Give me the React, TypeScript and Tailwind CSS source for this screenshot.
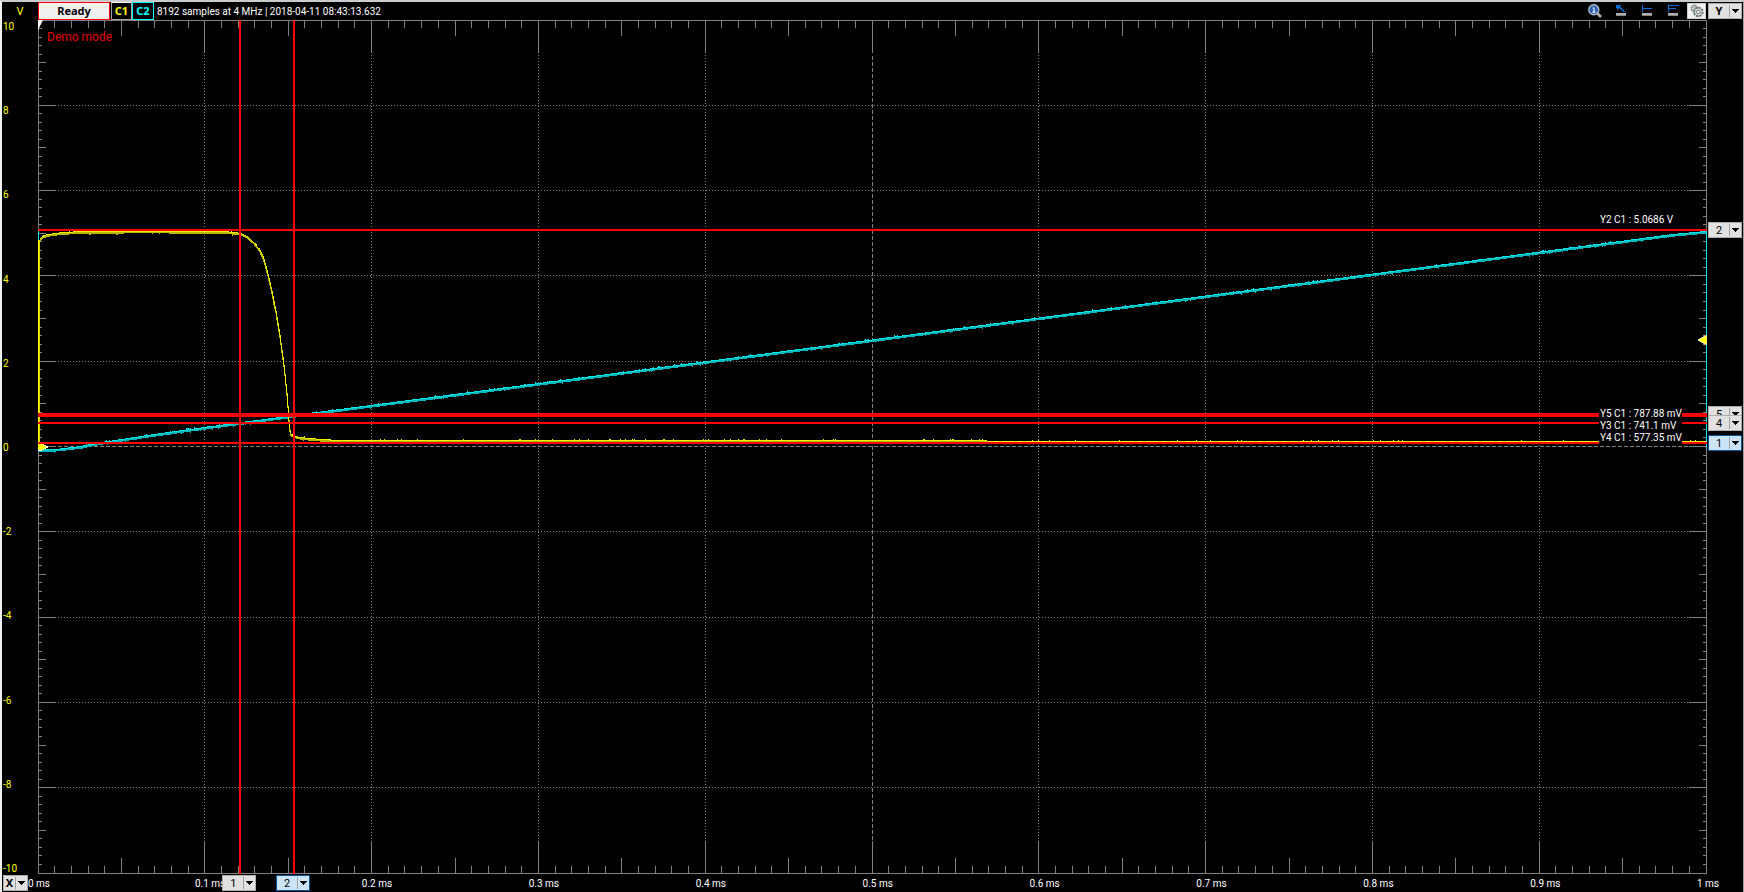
import { useEffect, useRef, useState } from "react";

const V_MAX = 10;
const yLabels = ["10", "8", "6", "4", "2", "0", "-2", "-4", "-6", "-8", "-10"];
const xLabels = ["0 ms", "0.1 ms", "0.2 ms", "0.3 ms", "0.4 ms", "0.5 ms", "0.6 ms", "0.7 ms", "0.8 ms", "0.9 ms"];

const xCursors = [
  { id: "1", at: 0.1213, active: false },
  { id: "2", at: 0.1535, active: true },
];
const yCursors = [
  { id: "2", volts: 5.0686, handle: 5.08, active: false },
  { id: "5", volts: 0.77, handle: 0.77, active: false },
  { id: "3", volts: 0.72, handle: null, active: false },
  { id: "4", volts: 0.56, handle: 0.56, active: false },
  { id: "1", volts: 0.09, handle: 0.09, active: true },
];

/* Channel samples: [time in ms, volts] */
const c1: [number, number][] = [
  [0.0008, 4.85], [0.002, 4.92], [0.005, 4.97], [0.012, 5.01], [0.022, 5.04], [0.06, 5.055], [0.112, 5.045],
  [0.118, 5.02], [0.1213, 5.0], [0.125, 4.93], [0.1285, 4.81], [0.132, 4.64], [0.1345, 4.44], [0.137, 4.08],
  [0.1395, 3.66], [0.142, 3.18], [0.1444, 2.6], [0.147, 1.86], [0.1487, 1.2], [0.1495, 0.8], [0.1501, 0.45],
  [0.1508, 0.32], [0.1525, 0.27], [0.156, 0.23], [0.162, 0.2], [0.175, 0.163], [0.2, 0.155], [0.45, 0.15], [0.6, 0.138], [1, 0.136],
];
const c2: [number, number][] = [
  [0, -0.07], [0.012, -0.05], [0.025, 0.01], [0.037, 0.1], [0.067, 0.28], [0.1, 0.46], [0.15, 0.72],
  [0.175, 0.85], [0.5, 2.51], [0.98, 4.98], [1, 5.05],
];

function noise(i: number) {
  const s = Math.sin(i * 127.1) * 43758.5453;
  return s - Math.floor(s);
}

function interpolate(points: [number, number][], t: number) {
  for (let i = 1; i < points.length; i++) {
    const [t0, v0] = points[i - 1];
    const [t1, v1] = points[i];
    if (t <= t1) return v0 + ((v1 - v0) * (t - t0)) / (t1 - t0);
  }
  return points[points.length - 1][1];
}

function trace(points: [number, number][], w: number, h: number, seed: number) {
  let bright = "";
  let dark = "";
  let prev: number | null = null;
  const start = Math.ceil(points[0][0] * w);
  for (let x = start; x < w; x++) {
    const level = (0.5 - interpolate(points, x / w) / (2 * V_MAX)) * h;
    const spike = noise(x + seed) < 0.06 ? 1 : 0;
    const y = Math.floor(level);
    const steep = prev !== null && y - prev > 1;
    const top = steep && prev !== null ? prev : y - spike;
    const len = steep && prev !== null ? y - prev : 1 + spike;
    const bottom = Math.floor(level + 1.7) + (noise(x * 3 + seed) < 0.05 ? 1 : 0);
    bright += `M${x} ${top}h1v${len}h-1z`;
    dark += `M${x} ${y}h1V${bottom + 1}h-1z`;
    prev = y;
  }
  return { bright, dark };
}

function Graticule({ w, h }: { w: number; h: number }) {
  let ticks = "";
  let dots = "";
  let dashes = "";
  for (let i = 1; i < 100; i++) {
    const x = Math.floor((i * (w - 1)) / 100) + 0.5;
    const len = i % 10 === 0 ? 33 : i % 5 === 0 ? 16 : 8;
    ticks += `M${x} 0v${len}M${x} ${h}v${-len}`;
    if (i === 50) dashes += `M${x} 36V${h - 33}`;
    else if (i % 10 === 0) dots += `M${x} 35V${h - 33}`;
    const y = Math.floor((i * (h - 1)) / 100) + 0.5;
    const side = i % 10 === 0 ? 18 : i % 5 === 0 ? 8 : 4;
    ticks += `M0 ${y}h${side}M${w} ${y}h${-side}`;
    if (i === 50) dashes += `M20 ${y}H${w - 18}`;
    else if (i % 10 === 0) dots += `M20 ${y}H${w - 18}`;
  }
  return (
    <g fill="none" stroke="#808080" shapeRendering="crispEdges">
      <path d={dots} strokeDasharray="1 2" />
      <path d={dashes} strokeDasharray="4 2" />
      <path d={ticks} />
      <rect x="0.5" y="0.5" width={w - 1} height={h - 1} />
    </g>
  );
}

function Plot() {
  const ref = useRef<HTMLDivElement>(null);
  const [size, setSize] = useState({ w: 1669, h: 854 });
  useEffect(() => {
    const el = ref.current;
    if (!el) return;
    const measure = () => setSize({ w: el.clientWidth, h: el.clientHeight });
    measure();
    const observer = new ResizeObserver(measure);
    observer.observe(el);
    return () => observer.disconnect();
  }, []);
  const { w, h } = size;
  const yAt = (v: number) => Math.floor((0.5 - v / (2 * V_MAX)) * h);
  const yellow = trace(c1, w, h, 5);
  const cyan = trace(c2, w, h, 90);
  const zero = yAt(0);
  const trigger = yAt(2.5);
  return (
    <div ref={ref} className="relative min-w-0 flex-1 overflow-hidden">
      <svg className="absolute inset-0 block h-full w-full" role="img" aria-label="Oscilloscope traces">
        <Graticule w={w} h={h} />
        <g shapeRendering="crispEdges">
          <path d={cyan.dark} fill="#00b8bc" />
          <path d={cyan.bright} fill="#00e6ea" />
          <path d={`M0 ${yAt(5.05)}h1V${zero}h-1zM${w - 1} ${yAt(5.05)}h1V${zero + 2}h-1z`} fill="#00e6ea" />
          <path d={yellow.dark} fill="#b8b800" />
          <path d={yellow.bright} fill="#f0f000" />
          <rect x="0" y={yAt(4.84)} width="1" height={zero - yAt(4.84)} fill="#ffff00" />
          <rect x="1" y={yAt(4.84)} width="1" height={zero - yAt(4.84)} fill="#d8d800" />
          <path d={`M0 ${zero - 4}h4v1h2v1h2v1h2v2h-2v1h-2v1h-2v1h-4z`} fill="#ffffff" />
          <path d={`M0 ${zero - 4}h3v1h2v1h2v1h1v2h-1v1h-2v1h-5z`} fill="#ffff00" />
          {yCursors.map((c) => (
            <rect key={c.id} x="0" y={yAt(c.volts) - 1} width={w} height="2" fill="#ff0000" />
          ))}
          {xCursors.map((c) => (
            <rect key={c.id} x={Math.floor(c.at * w) - 1} y="0" width="2" height={h} fill="#ff0000" />
          ))}
        </g>
        <path d="M0 0h5L0 10z" fill="#ffffff" />
        <path d={`M${w} ${trigger - 5}l-9 5l9 5z`} fill="#ffff00" stroke="#ffffd0" />
      </svg>
      <p className="absolute left-[9px] top-[9px] text-[12px] leading-4 text-[#e60000]">Demo mode</p>
      <p className="absolute right-[25px] top-[194px] w-[83px] whitespace-nowrap bg-black pl-px">Y2 C1 : 5.0686 V</p>
      <div className="absolute right-[25px] top-[388px] w-[83px] whitespace-nowrap bg-black pl-px">
        <p>Y5 C1 : 787.88 mV</p>
        <p>Y3 C1 : 741.1 mV</p>
        <p>Y4 C1 : 577.35 mV</p>
      </div>
    </div>
  );
}

function SplitButton({ label, active = false, bold = false, small = false, name }: {
  label: string; active?: boolean; bold?: boolean; small?: boolean; name: string;
}) {
  return (
    <button
      type="button"
      aria-label={name}
      className={`flex h-4 items-center border text-[11px] leading-3 text-black ${small ? "w-[25px]" : "w-[34px]"} ${
        active ? "border-[#005499] bg-[#cce4f7]" : "border-[#adadad] bg-[#e1e1e1]"
      } ${bold ? "font-['Noto_Sans',sans-serif] font-bold" : ""}`}
    >
      <span className={`flex-1 text-center ${bold ? "" : "pt-0.5"}`}>{label}</span>
      <span className="h-3 w-px bg-[#a0a0a0]" />
      <svg width="11" height="4" viewBox="0 0 11 4" shapeRendering="crispEdges" aria-hidden="true">
        <path d="M2 0h7v1h-1v1h-1v1h-1v1h-1v-1h-1v-1h-1v-1h-1z" fill="#000" />
      </svg>
    </button>
  );
}

function ZoomIcon() {
  return (
    <svg width="14" height="14" viewBox="0 0 14 14" aria-hidden="true">
      <path d="M9.500 9.500l3.500 3.500" stroke="#b4b0a8" strokeWidth="2.600" />
      <circle cx="5.800" cy="5.800" r="5" fill="#2b5fae" stroke="#aebccb" strokeWidth="1.400" />
      <path d="M4.600 4h1.400v4M4.300 8.200h3.200" fill="none" stroke="#f0f4fa" strokeWidth="1.200" />
    </svg>
  );
}

function MarkIcon({ children }: { children: React.ReactNode }) {
  return (
    <svg width="12" height="12" viewBox="0 0 12 12" shapeRendering="crispEdges" aria-hidden="true">
      <g fill="#0070d8">{children}</g>
      <path d="M1 8h10v2h-10z" fill="#b0b0b0" />
      <path d="M1 10h10v1h-10z" fill="#848484" />
    </svg>
  );
}

function GearIcon() {
  return (
    <svg width="14" height="14" viewBox="0 0 14 14" aria-hidden="true">
      <circle cx="4.500" cy="4.500" r="3.200" fill="#c4caca" stroke="#7c8686" strokeWidth="1.600" strokeDasharray="1.600 0.900" />
      <circle cx="8.300" cy="8" r="4.300" fill="#b8c0c0" stroke="#6c7676" strokeWidth="2" strokeDasharray="2.200 1.100" />
      <circle cx="8.300" cy="8" r="3.200" fill="#ccd2d2" />
      <circle cx="8.300" cy="8" r="1.700" fill="#f8f8f8" stroke="#7c8686" />
    </svg>
  );
}

export default function App() {
  const tool = "flex w-[26px] justify-center";
  return (
    <div className="flex h-screen flex-col border-l-2 border-r border-t-2 border-l-[#f0f0f0] border-r-[#a0a0a0] border-t-[#c8cccc] bg-black font-['Roboto',sans-serif] text-[10px] leading-3 text-white">
      <header className="flex h-[18px] shrink-0 items-center">
        <span className="w-9 pt-0.5 text-center text-[11px] text-[#ffff00]">V</span>
        <div className="flex h-[18px] w-[72px] items-center justify-center border border-[#ff0000] bg-[#f0f0f0] font-['Noto_Sans',sans-serif] text-[11px] font-bold text-black">Ready</div>
        <button type="button" className="ml-px h-[18px] w-[21px] border border-[#a0a0a0] border-t-white font-['Noto_Sans',sans-serif] text-[11px] font-bold text-[#ffff00]">C1</button>
        <button type="button" className="h-[18px] w-[22px] border border-[#00ffff] font-['Noto_Sans',sans-serif] text-[11px] font-bold text-[#00ffff]">C2</button>
        <span className="ml-[3px] flex-1 whitespace-nowrap pt-0.5">8192 samples at 4 MHz | 2018-04-11 08:43:13.632</span>
        <div className="flex items-center">
          <button type="button" aria-label="Zoom 1:1" className={tool}><ZoomIcon /></button>
          <button type="button" aria-label="Free cursor" className={tool}>
            <MarkIcon><path d="M1 0h5v1h-1v1h1v1h1v1h1v1h1v1h1v1h-2v-1h-1v-1h-1v-1h-1v-1h-1v1h-1v1h-1v-2h-1z" /></MarkIcon>
          </button>
          <button type="button" aria-label="Vertical cursor" className={tool}>
            <MarkIcon><path d="M1 0h1v3h9v1h-9v3h-1z" /></MarkIcon>
          </button>
          <button type="button" aria-label="Horizontal cursors" className={tool}>
            <MarkIcon><path d="M1 0h11v1h-10v2h7v1h-7v3h-1z" /></MarkIcon>
          </button>
          <button type="button" aria-label="Settings" className="ml-px flex h-4 w-[19px] items-center justify-center border border-[#d0d0d0] bg-[#f0f0f0]"><GearIcon /></button>
          <div className="ml-0.5 mr-px"><SplitButton label="Y" bold name="Add Y cursor" /></div>
        </div>
      </header>

      <main className="flex min-h-0 flex-1">
        <div className="-mb-px flex w-9 flex-col justify-between pl-px pt-px text-[#ffff00]">
          {yLabels.map((label) => (
            <span key={label}>{label}</span>
          ))}
        </div>
        <Plot />
        <div className="relative w-9">
          {yCursors.map((c) =>
            c.handle === null ? null : (
              <div key={c.id} className="absolute left-px -mt-2" style={{ top: `${50 - c.handle * 5}%` }}>
                <SplitButton label={c.id} active={c.active} name={`Y cursor ${c.id}`} />
              </div>
            ),
          )}
        </div>
      </main>

      <footer className="flex h-[18px] shrink-0 items-center">
        <div className="ml-px"><SplitButton label="X" bold small name="Add X cursor" /></div>
        <div className="relative flex flex-1 pt-0.5">
          {xLabels.map((label) => (
            <span key={label} className="flex-1 whitespace-nowrap">{label}</span>
          ))}
          <div className="absolute inset-0 left-[10px] -right-[10px]">
            {xCursors.map((c) => (
              <div key={c.id} className="absolute -top-px -ml-[18px]" style={{ left: `${c.at * 100}%` }}>
                <SplitButton label={c.id} active={c.active} name={`X cursor ${c.id}`} />
              </div>
            ))}
          </div>
        </div>
        <span className="w-[46px] whitespace-nowrap pt-0.5">1 ms</span>
      </footer>
    </div>
  );
}
